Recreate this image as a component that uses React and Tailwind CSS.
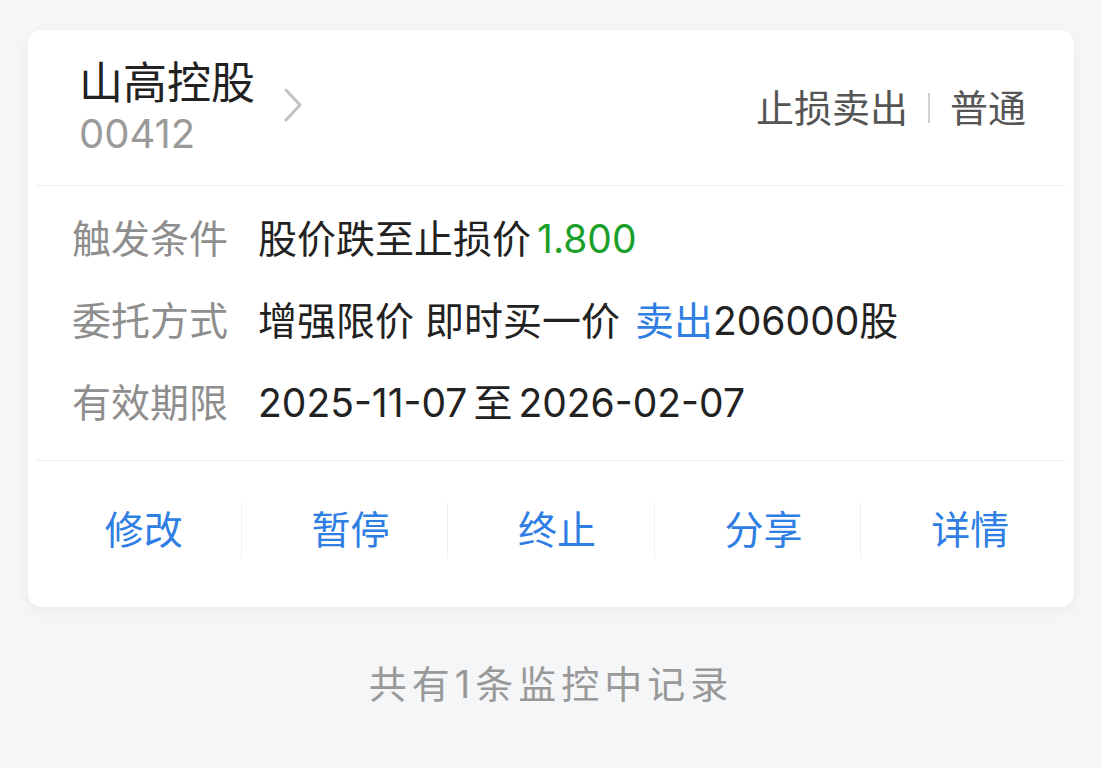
export default function App() {
  const font = { fontFamily: '"Inter", "Noto Sans CJK SC", "Noto Sans", sans-serif' };
  const rows = [
    {
      label: "触发条件",
      value: (
        <>
          股价跌至止损价<span className="ml-[6px] text-[#1a9f2a]">1.800</span>
        </>
      ),
    },
    {
      label: "委托方式",
      value: (
        <>
          增强限价 即时买一价 <span className="ml-[4px] text-[#2f7ee3]">卖出</span>206000股
        </>
      ),
    },
    {
      label: "有效期限",
      value: (
        <>
          2025-11-07<span className="mx-[6px]">至</span>2026-02-07
        </>
      ),
    },
  ];
  const actions = ["修改", "暂停", "终止", "分享", "详情"];
  return (
    <div className="min-h-[768px] w-full bg-[#f5f6f8] pt-[30px]" style={font}>
      <div className="mx-[28px] rounded-[14px] bg-white shadow-[0_4px_14px_rgba(0,0,0,0.05)]">
        <div className="flex h-[155px] items-center justify-between pl-[51px] pr-[48px]">
          <div className="flex items-center">
            <div className="flex flex-col">
              <div className="text-[44px] leading-[48px] text-[#222]">山高控股</div>
              <div className="mt-[4px] text-[40px] leading-[46px] text-[#9a9a9a]">00412</div>
            </div>
            <svg className="ml-[28px] mt-[-6px]" width="20" height="34" viewBox="0 0 20 34" fill="none">
              <path d="M3 2 L17 17 L3 32" stroke="#c4c4c4" strokeWidth="3" strokeLinecap="round" strokeLinejoin="round" />
            </svg>
          </div>
          <div className="flex items-center text-[38px] leading-[46px] text-[#555]">
            <span>止损卖出</span>
            <span className="mx-[20px] h-[30px] w-[2px] bg-[#cfcfcf]" />
            <span>普通</span>
          </div>
        </div>
        <div className="mx-[8px] h-px bg-[#efefef]" />
        <div className="pb-[16px] pt-[12px]">
          {rows.map((r) => (
            <div key={r.label} className="flex h-[82px] items-center pl-[44px]">
              <div className="w-[186px] text-[39px] text-[#8e8e8e]">{r.label}</div>
              <div className="text-[39px] text-[#222]">{r.value}</div>
            </div>
          ))}
        </div>
        <div className="mx-[8px] h-px bg-[#efefef]" />
        <div className="flex h-[146px] items-center px-[7px] pb-[8px]">
          {actions.map((a, i) => (
            <div
              key={a}
              className={
                "flex h-[57px] flex-1 items-center justify-center pl-[12px] text-[39px] text-[#2f7ee3] " +
                (i > 0 ? "border-l border-[#f0f0f0]" : "")
              }
            >
              {a}
            </div>
          ))}
        </div>
      </div>
      <div className="mt-[49px] text-center text-[38px] tracking-[5px] text-[#999]">共有1条监控中记录</div>
    </div>
  );
}
